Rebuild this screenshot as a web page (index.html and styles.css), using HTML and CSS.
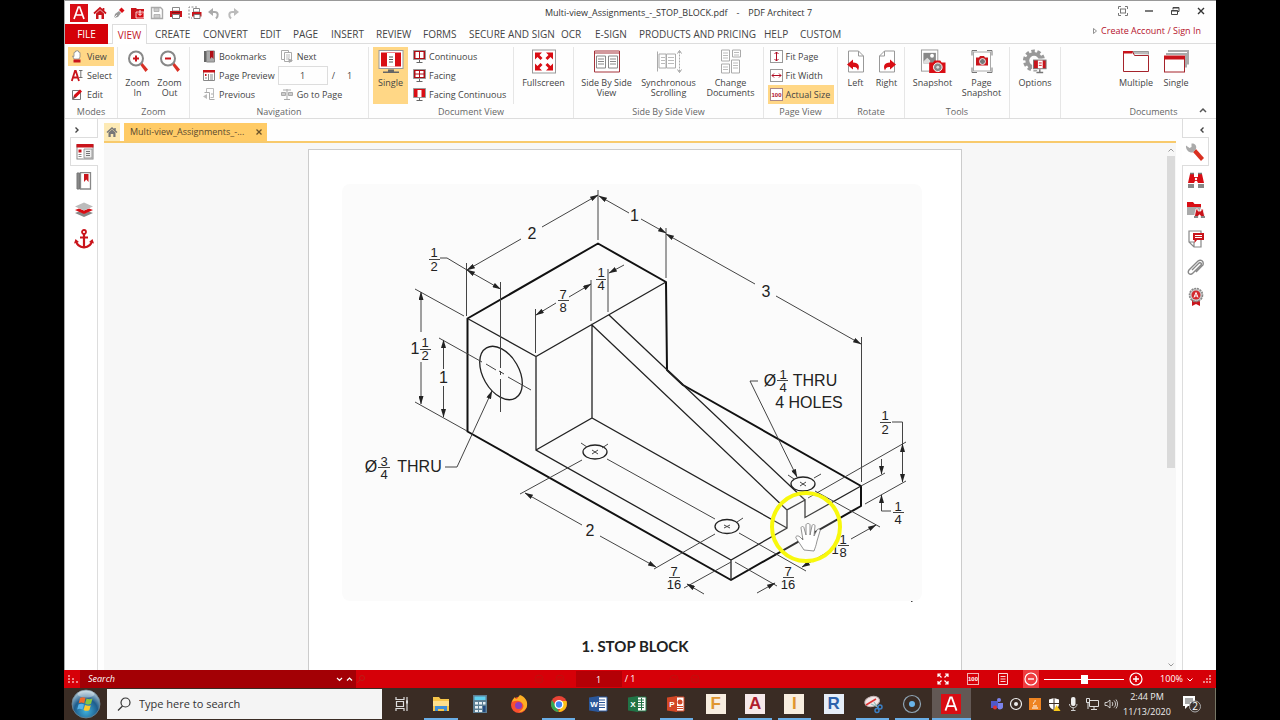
FILE: index.html
```html
<!DOCTYPE html>
<html lang="en">
<head>
<meta charset="utf-8">
<title>Multi-view_Assignments_-_STOP_BLOCK.pdf - PDF Architect 7</title>
<link rel="stylesheet" href="styles.css">
</head>
<body>
<div class="desktop">
<div class="app">
  <header class="titlebar">
    <div class="quick">
      <span class="logo"><svg width="18" height="18" viewBox="0 0 18 18"><rect width="18" height="18" fill="#d90d14"/><path d="M4 15L8.300 3h1.400L14 15M5.500 11h7" fill="none" stroke="#fff" stroke-width="1.700"/></svg></span>
      <button aria-label="Home"><svg width="14" height="14" viewBox="0 0 14 14"><path d="M1 7.500L7 2l6 5.500M10.500 2v3" fill="none" stroke="#c9141b" stroke-width="1.700"/><path d="M3 7.500L7 4l4 3.500V13H8.500V9h-3v4H3z" fill="#c9141b"/></svg></button>
      <button aria-label="Create"><svg width="14" height="14" viewBox="0 0 14 14"><path d="M2 12l1-4 4-3 2 2-3 4z" fill="#999"/><path d="M1.500 12.500L5 9" stroke="#eee"/><path d="M7 4l2.500-2.500L12.500 4.500 10 7z" fill="#d90d14"/></svg></button>
      <button aria-label="Open"><svg width="14" height="14" viewBox="0 0 14 14"><path d="M0 2h5l1 1h7v10H0z" fill="#c9141b"/><path d="M5 6h8v6H5z" fill="#d90d14" stroke="#fff" stroke-width=".8"/><path d="M9 4v5M7 7.500l2 2 2-2" stroke="#fff" fill="none"/></svg></button>
      <button aria-label="Save" disabled><svg width="14" height="14" viewBox="0 0 14 14"><path d="M1.500 1.500h9l2 2v9h-11z" fill="none" stroke="#aaa" stroke-width="1.400"/><path d="M4 2h5v3.500H4zM4 8.500h6V12H4z" fill="#ccc" stroke="#aaa" stroke-width=".8"/></svg></button>
      <button aria-label="Print"><svg width="14" height="14" viewBox="0 0 14 14"><path d="M3.500 1.500h7V5h-7z" fill="#fff" stroke="#888"/><path d="M1 5h12v6H1z" fill="#c9141b"/><path d="M3.500 8.500h7v4h-7z" fill="#fff" stroke="#777"/><path d="M3 6.500h8" stroke="#7d1014"/></svg></button>
      <button aria-label="Print area"><svg width="14" height="14" viewBox="0 0 14 14"><path d="M9 1H1v11h3" fill="none" stroke="#888" stroke-dasharray="2 1.500"/><path d="M5.500 2.500h6V6h-6z" fill="#fff" stroke="#888"/><path d="M4 6h9.500v4.500H4z" fill="#c9141b"/><path d="M6 8.500h6v4H6z" fill="#fff" stroke="#777"/></svg></button>
      <button aria-label="Undo" disabled><svg width="14" height="14" viewBox="0 0 14 14"><path d="M2 6h5.500c4 0 4 4 1.500 6.500" fill="none" stroke="#aaa" stroke-width="2"/><path d="M1 6l5-4v8z" fill="#aaa"/></svg></button>
      <button aria-label="Redo" disabled><svg width="14" height="14" viewBox="0 0 14 14"><path d="M12 6H6.500C2.500 6 2.500 10 5 12.500" fill="none" stroke="#bbb" stroke-width="2"/><path d="M13 6L8 2v8z" fill="#bbb"/></svg></button>
    </div>
    <div class="caption">Multi-view_Assignments_-_STOP_BLOCK.pdf<span>-</span>PDF Architect 7</div>
    <div class="winbtns">
      <button aria-label="Full view"><svg width="10" height="10" viewBox="0 0 10 10"><path d="M.5 3V.5H3M7 .5h2.500V3M9.500 7v2.500H7M3 9.500H.5V7" fill="none" stroke="#777"/><rect x="2.500" y="3" width="5" height="4" fill="none" stroke="#777"/></svg></button>
      <button aria-label="Minimize"><svg width="10" height="10" viewBox="0 0 10 10"><path d="M1 5h8" stroke="#333" stroke-width="1.300"/></svg></button>
      <button aria-label="Restore"><svg width="10" height="10" viewBox="0 0 10 10"><path d="M3 3.500V1.500h6v4H7.500M1.500 4.500h6v4h-6z" fill="none" stroke="#444"/><path d="M3 2h6M1.500 5h6" stroke="#444"/></svg></button>
      <button aria-label="Close"><svg width="10" height="10" viewBox="0 0 10 10"><path d="M2 2l6 6M8 2L2 8" stroke="#333" stroke-width="1.400"/></svg></button>
    </div>
  </header>

  <nav class="tabs">
    <button class="file">FILE</button>
    <button class="current">VIEW</button>
    <button>CREATE</button><button>CONVERT</button><button>EDIT</button><button>PAGE</button><button>INSERT</button><button>REVIEW</button><button>FORMS</button><button>SECURE AND SIGN</button><button>OCR</button><button>E-SIGN</button><button>PRODUCTS AND PRICING</button><button>HELP</button><button>CUSTOM</button>
    <a class="account" href="#"><svg width="4" height="6" viewBox="0 0 4 6"><path d="M.5.5L3.500 3 .5 5.500z" fill="none" stroke="#777" stroke-width=".8"/></svg>Create Account / Sign In</a>
  </nav>

  <div class="ribbon">
    <section class="group">
      <div class="items">
        <div class="stack modes">
          <button class="row on"><svg width="12" height="13" viewBox="0 0 12 13"><path d="M3 9L1.500 6l1.500.5V2.500l1.500-.5V1h1.500v-.3L7.500 1v1L9 2.500V7l-1 2z" fill="#fff" stroke="#888" stroke-width=".8"/><path d="M2.500 9.500h7v3h-7z" fill="#c9141b"/></svg>View</button>
          <button class="row"><svg width="12" height="13" viewBox="0 0 12 13"><path d="M.8 12L4 2h.8L8 12M2 8.500h5" fill="none" stroke="#c9141b" stroke-width="1.800"/><path d="M8 1.500h3.500M8 8.500h3.500M9.800 1.500v7" stroke="#555" stroke-width=".8"/></svg>Select</button>
          <button class="row"><svg width="12" height="13" viewBox="0 0 12 13"><path d="M1.500 2.500h8v9h-8z" fill="#fff" stroke="#777"/><path d="M2 11l1-4 6-5.500 2 2L5 9.500z" fill="#d90d14"/><path d="M3 8l1.500 1.500L2 11z" fill="#555"/></svg>Edit</button>
        </div>
      </div>
      <h2>Modes</h2>
    </section>
    <section class="group">
      <div class="items">
        <button class="big w32"><svg width="24" height="24" viewBox="0 0 24 24"><path d="M14 15l2-2 6 7-2.500 2.500z" fill="#d93025"/><circle cx="10" cy="9" r="7" fill="#fff" stroke="#888" stroke-width="2"/><path d="M10 6v6M7 9h6" stroke="#c9141b" stroke-width="2"/></svg>Zoom<br>In</button>
        <button class="big w32"><svg width="24" height="24" viewBox="0 0 24 24"><path d="M14 15l2-2 6 7-2.500 2.500z" fill="#d93025"/><circle cx="10" cy="9" r="7" fill="#fff" stroke="#888" stroke-width="2"/><path d="M7 9h6" stroke="#c9141b" stroke-width="2"/></svg>Zoom<br>Out</button>
      </div>
      <h2>Zoom</h2>
    </section>
    <section class="group">
      <div class="items spread">
        <div class="stack">
          <button class="row"><svg width="12" height="13" viewBox="0 0 12 13"><path d="M1 1h2v11H1z" fill="#666"/><path d="M3.500 1h8v11h-8z" fill="#aaa" stroke="#888"/><path d="M7 1h3.500v8L8.700 7 7 9z" fill="#b00d14"/></svg>Bookmarks</button>
          <button class="row"><svg width="12" height="13" viewBox="0 0 12 13"><path d="M.5 2h11v9.500H.5z" fill="#fff" stroke="#888"/><path d="M0 1h12v2.500H0z" fill="#c9141b"/><path d="M2 5h1.500v2H2z" fill="#c9141b"/><path d="M2 9h2M5.500 5v6M7 6h3M7 8h3M7 10h3" stroke="#888"/></svg>Page Preview</button>
          <button class="row"><svg width="12" height="13" viewBox="0 0 12 13"><path d="M3.500.5h7v9h-3M3.500.5v4" fill="none" stroke="#bbb"/><path d="M1.500 4.500h5v7h5M8 6h2" fill="none" stroke="#aaa"/><path d="M0 8.500L4 6v5z" fill="#bbb"/></svg>Previous</button>
        </div>
        <div class="stack">
          <button class="row"><svg width="12" height="13" viewBox="0 0 12 13"><path d="M.5.5h7v9h-7z" fill="#fff" stroke="#aaa"/><path d="M3.500 2.500h7v9h-7z" fill="#fff" stroke="#aaa"/><path d="M5 5h4M5 7h4M5 9h2" stroke="#bbb"/><path d="M7 8l5 2.500L8 13z" fill="#aaa"/></svg>Next</button>
          <div class="row pageno"><input type="text" value="1" aria-label="Page number"><span>/</span><span>1</span></div>
          <button class="row"><svg width="12" height="13" viewBox="0 0 12 13"><path d="M.5 4.500h4v3h-4zM7.500 4.500h4v3h-4z" fill="#ccc" stroke="#aaa"/><path d="M6 1v10M3 11.500h6M2 2h8" stroke="#aaa"/></svg>Go to Page</button>
        </div>
      </div>
      <h2>Navigation</h2>
    </section>
    <section class="group">
      <div class="items">
        <button class="big on w35"><svg width="26" height="24" viewBox="0 0 26 24"><rect x="1" y="1" width="24" height="18" fill="#fff" stroke="#999"/><path d="M3 3h20v14H3z" fill="#d90d14"/><path d="M9 3.500h8V17H9z" fill="#fff"/><path d="M11 7.500h4M11 10h4M11 12.500h4" stroke="#555"/><path d="M10 20h6v2h5v1.500H5V22h5z" fill="#666"/></svg>Single</button>
        <div class="stack dv">
          <button class="row"><svg width="13" height="13" viewBox="0 0 13 13"><path d="M.5.500h12v9H.5z" fill="#b00d14" stroke="#999"/><path d="M2.500 2h3.500v6H2.500zM7 2h3.500v6H7z" fill="#fff"/><path d="M6.500 10v2M3.500 12.500h6" stroke="#666"/></svg>Continuous</button>
          <button class="row"><svg width="13" height="13" viewBox="0 0 13 13"><path d="M.5.500h12v9H.5z" fill="#b00d14" stroke="#999"/><path d="M2.500 2h3.500v2.500H2.500zM7 2h3.500v2.500H7zM2.500 5.500h3.500V8H2.500zM7 5.500h3.500V8H7z" fill="#fff"/><path d="M6.500 10v2M3.500 12.500h6" stroke="#666"/></svg>Facing</button>
          <button class="row"><svg width="13" height="13" viewBox="0 0 13 13"><path d="M.5.500h12v9H.5z" fill="#d90d14" stroke="#999"/><path d="M4.500 2h4v7h-4z" fill="#fff"/><path d="M6.500 10v2M3.500 12.500h6" stroke="#666"/></svg>Facing Continuous</button>
        </div>
        <button class="big fullscreen"><svg width="24" height="24" viewBox="0 0 24 24"><rect x=".5" y=".5" width="23" height="23" fill="#fff" stroke="#999"/><path d="M3 3h7L7.500 5.500l3 3-2 2-3-3L3 10zM21 3v7l-2.500-2.500-3 3-2-2 3-3L14 3zM3 21v-7l2.500 2.500 3-3 2 2-3 3L10 21zM21 21h-7l2.500-2.500-3-3 2-2 3 3L21 14z" fill="#d90d14"/></svg>Fullscreen</button>
      </div>
      <h2>Document View</h2>
    </section>
    <section class="group">
      <div class="items">
        <button class="big w62"><svg width="26" height="24" viewBox="0 0 26 24"><path d="M.5 1.500h25v21H.5z" fill="#fff" stroke="#a5323a"/><path d="M.5 3.500h25" stroke="#a5323a"/><path d="M2.500 6.500h9v12h-9zM14.500 6.500h9v12h-9z" fill="#fff" stroke="#888"/><path d="M4 9.500h6M4 12h6M4 14.500h6M16 9.500h6M16 12h6M16 14.500h6" stroke="#888"/></svg>Side By Side<br>View</button>
        <button class="big w62"><svg width="26" height="24" viewBox="0 0 26 24"><path d="M1.500 2v20M3 4.500h7v14H3zM10.500 4.500h9v14h-9z" fill="#fff" stroke="#aaa"/><path d="M5 8h4M5 11h4M5 14h4M12 8h6M12 11h6M12 14h6" stroke="#bbb"/><path d="M23.500 2v20" stroke="#aaa" stroke-dasharray="2 1"/><path d="M21.500 4l2-3 2 3M21.500 20l2 3 2-3" fill="none" stroke="#999"/></svg>Synchronous<br>Scrolling</button>
        <button class="big w62"><svg width="26" height="24" viewBox="0 0 26 24"><path d="M3.500.5h8v11h-8zM14.500.5h8v7h-8zM3.500 14.500h8v9h-8zM13.500 10.500h8v13h-8z" fill="#fff" stroke="#aaa"/><path d="M5 3.500h5M5 6h5M5 8.500h5M16 3h5M16 5.500h5M5 17.500h5M5 20h5M15 13.500h5M15 16h5M15 18.500h5" stroke="#bbb"/></svg>Change<br>Documents</button>
      </div>
      <h2>Side By Side View</h2>
    </section>
    <section class="group">
      <div class="items">
        <div class="stack pv">
          <button class="row"><svg width="13" height="13" viewBox="0 0 13 13"><rect x=".5" y=".5" width="12" height="12" fill="#fff" stroke="#999"/><path d="M6.500 2v9M4.500 4l2-2 2 2M4.500 9l2 2 2-2" fill="none" stroke="#b00d24"/></svg>Fit Page</button>
          <button class="row"><svg width="13" height="13" viewBox="0 0 13 13"><rect x=".5" y=".5" width="12" height="12" fill="#fff" stroke="#999"/><path d="M2 6.500h9M4 4.500l-2 2 2 2M9 4.500l2 2-2 2" fill="none" stroke="#b00d24"/></svg>Fit Width</button>
          <button class="row on"><svg width="13" height="13" viewBox="0 0 13 13"><rect x=".5" y=".5" width="12" height="12" fill="#fff" stroke="#a88"/><text x="6.500" y="9" class="hundred">100</text></svg>Actual Size</button>
        </div>
      </div>
      <h2>Page View</h2>
    </section>
    <section class="group">
      <div class="items">
        <button class="big w31"><svg width="20" height="24" viewBox="0 0 20 24"><path d="M2.500 1.500h10l5 5v16h-15z" fill="#fff" stroke="#999"/><path d="M12.500 1.500v5h5" fill="none" stroke="#999"/><path d="M1 15l6-5v3c6 0 7 4 5 8-1-3-2-3.500-5-3.500V20z" fill="#d90d14"/></svg>Left</button>
        <button class="big w31"><svg width="20" height="24" viewBox="0 0 20 24"><path d="M17.500 1.500h-10l-5 5v16h15z" fill="#fff" stroke="#999"/><path d="M7.500 1.500v5h-5" fill="none" stroke="#999"/><path d="M19 15l-6-5v3c-6 0-7 4-5 8 1-3 2-3.500 5-3.500V20z" fill="#d90d14"/></svg>Right</button>
      </div>
      <h2>Rotate</h2>
    </section>
    <section class="group">
      <div class="items">
        <button class="big w49"><svg width="26" height="26" viewBox="0 0 26 26"><rect x="1" y="1" width="17" height="22" fill="#fff" stroke="#999"/><path d="M3 4h13v11H3z" fill="#888"/><circle cx="12" cy="7" r="2" fill="#fff"/><path d="M3 13l4-4 3 3v3H3z" fill="#ddd"/><path d="M9 14h4l1.500-2h6l1.500 2h4v11H9z" fill="#d90d14"/><circle cx="18" cy="19" r="4.500" fill="#888" stroke="#fff"/><circle cx="18" cy="19" r="1.500" fill="#ddd"/></svg>Snapshot</button>
        <button class="big w49"><svg width="22" height="24" viewBox="0 0 22 24"><path d="M1 6V1h5M16 1h5v5M21 18v5h-5M6 23H1v-5" fill="none" stroke="#777"/><rect x="2.500" y="2.500" width="17" height="19" fill="#fff" stroke="#aaa"/><path d="M5 8h3l1-1.500h4L14 8h3v8H5z" fill="#c9141b"/><circle cx="11.500" cy="12" r="3" fill="#777" stroke="#fff" stroke-width=".8"/></svg>Page<br>Snapshot</button>
      </div>
      <h2>Tools</h2>
    </section>
    <section class="group">
      <div class="items">
        <button class="big w49"><svg width="26" height="26" viewBox="0 0 26 26"><circle cx="12" cy="12" r="9.500" fill="none" stroke="#999" stroke-width="4" stroke-dasharray="3.500 2.470"/><circle cx="12" cy="12" r="7" fill="none" stroke="#999" stroke-width="4"/><rect x="10" y="10" width="15" height="12" fill="#fff"/><rect x="11.500" y="11.500" width="13" height="9" fill="#c9141b" stroke="#777"/><path d="M16 12h5v8h-5z" fill="#fff"/><path d="M17 14.500h3M17 17h3" stroke="#c9141b"/><path d="M18 21v3M14.500 24.500h7" stroke="#777" stroke-width="1.500"/></svg>Options</button>
      </div>
    </section>
    <section class="group docs">
      <div class="items">
        <button class="big w40"><svg width="26" height="24" viewBox="0 0 26 24"><path d="M9 4.500V2h16.500v3" fill="#bbb" stroke="#999"/><path d="M.5 2h9l2 4h14v16H.5z" fill="#fff" stroke="#a5232b"/><path d="M0 1.500h9.500V4H0z" fill="#c9141b"/></svg>Multiple</button>
        <button class="big w40"><svg width="26" height="24" viewBox="0 0 26 24"><path d="M5 1.500h20V15M3 4.500h20V18" fill="none" stroke="#aaa" stroke-width="2"/><rect x="1.500" y="7.500" width="20" height="15" fill="#fff" stroke="#a5232b"/><path d="M1 6h21v4H1z" fill="#c9141b"/></svg>Single</button>
      </div>
      <h2>Documents</h2>
      <button class="collapse" aria-label="Collapse ribbon"><svg width="8" height="6" viewBox="0 0 8 6"><path d="M1 5l3-3 3 3" fill="none" stroke="#555" stroke-width="1.500"/></svg></button>
    </section>
  </div>

  <div class="work">
    <aside class="rail left">
      <button class="toggle" aria-label="Expand"><svg width="6" height="8" viewBox="0 0 6 8"><path d="M1.500 1.500L4 4 1.500 6.500" fill="none" stroke="#444" stroke-width="1.400"/></svg></button>
      <button class="sel" aria-label="Pages"><svg width="18" height="16" viewBox="0 0 18 16"><rect x="1" y="1" width="16" height="14" fill="#fff" stroke="#888"/><path d="M.5 0h17v3.500H.5z" fill="#c9141b"/><path d="M2.500 5.500h3v3h-3z" fill="#c9141b"/><path d="M2.500 10.500h3M2.500 12.500h3" stroke="#888"/><path d="M8 5h8v9H8z" fill="#eee" stroke="#888" stroke-width=".8"/><path d="M10 7.500h4M10 9.500h4M10 11.500h4" stroke="#777"/></svg></button>
      <button aria-label="Bookmarks"><svg width="16" height="18" viewBox="0 0 16 18"><path d="M1 1h2.500v16H1z" fill="#888" stroke="#777"/><path d="M4.500.5h10v16.500h-10z" fill="#fff" stroke="#888" stroke-width="1.300"/><path d="M8 2h4.500v8l-2.200-2.500L8 10z" fill="#c9141b"/></svg></button>
      <button aria-label="Layers"><svg width="20" height="16" viewBox="0 0 20 16"><path d="M1 11l9 4 9-4-4-1.500-5 2-5-2z" fill="#888"/><path d="M1 8l9 4 9-4-4-1.500-5 2-5-2z" fill="#d90d14"/><path d="M1 4.500L10 .5l9 4-9 4z" fill="#bbb"/></svg></button>
      <button aria-label="Destinations"><svg width="20" height="20" viewBox="0 0 20 20"><circle cx="10" cy="3" r="2" fill="none" stroke="#c9141b" stroke-width="1.800"/><path d="M10 5v14M6 8.500h8M2 12c1 5 4 6 8 6.500 4-.5 7-1.500 8-6.500" fill="none" stroke="#c9141b" stroke-width="2.200"/><path d="M0 14.500l1.500-4.500L5 13zM20 14.500L18.500 10 15 13z" fill="#c9141b"/></svg></button>
    </aside>

    <main class="viewer">
      <div class="doctabs">
        <button class="home" aria-label="Start page"><svg width="12" height="12" viewBox="0 0 12 12"><path d="M1 6.500L6 2l5 4.500M9 2v2.500" fill="none" stroke="#777" stroke-width="1.500"/><path d="M2.500 6.500L6 3.500l3.500 3V11H7.300V8H4.700v3H2.500z" fill="#777"/></svg></button>
        <button class="doctab"><span>Multi-view_Assignments_-...</span><svg width="6" height="6" viewBox="0 0 6 6"><path d="M.5.5l5 5M5.500.5l-5 5" stroke="#6b5228" stroke-width="1.300"/></svg></button>
      </div>
      <div class="canvas">
        <div class="pagearea">
          <article class="page">
            <svg class="drawing" viewBox="309 150 652 482" role="img" aria-label="Isometric view of a stop block">
              <defs>
                <marker id="arr" viewBox="0 0 10 6" refX="9.500" refY="3" markerWidth="9" markerHeight="5" markerUnits="userSpaceOnUse" orient="auto-start-reverse"><path d="M0 0l10 3-10 3z" fill="#222"/></marker>
              </defs>
              <rect x="342" y="184" width="580" height="417" rx="8" fill="#fbfbfb"/>
              <path class="thick" d="M467.500 318.500L598 243.500 666 282l1 88 16 15 178 101v20L731 580 467.500 431.500z"/>
              <path class="med" d="M467.500 318.500L536 356.500 666 282M536 356.500V450l195 110 56-32v-18l18-10v17.500L861 486M536 450l56-32 195 110M592 418v-93l195 185M609 315l196 185M731 560v20"/>
              <g class="med">
                <ellipse cx="501" cy="373" rx="29" ry="18" transform="rotate(60 501 373)"/>
                <ellipse cx="595" cy="452" rx="12" ry="7"/><ellipse cx="727" cy="526.500" rx="12" ry="7"/><ellipse cx="803" cy="484" rx="12" ry="7"/>
              </g>
              <g class="thin">
                <path d="M598 190v50M466.500 263v53M500.500 282v86M500.500 371v4M500.500 379v33M415 289l49 27M415 402l52 29M535.500 309v44M591 280v41M608 269v43M666 228v50M861.500 337v145"/>
                <path d="M439 338l43 24M486 364l10 6M499 371l5 3M508 377l23 13"/>
                <path d="M581 443l6 4M608 444l-6 4M592 454l6-4M592 450l6 4M582 460l-62 34M607 459l108 60M739 533l67 38M743 518l-6 4M715 534l-61 35M724 528l6-3M724 525l6 3M788 475l6 4M821 474l-7 4M800 486l6-4M800 482l6 4M815 491l65 36M808 498l98-56M861 486l24-13M865 504l41-23M731 562l-47 26M735 562l42 24"/>
                <path marker-end="url(#arr)" d="M542 227l56-32"/><path marker-end="url(#arr)" d="M521 239l-54 31"/>
                <path marker-end="url(#arr)" d="M629 213l-30-17"/><path marker-end="url(#arr)" d="M641 219l25 14"/>
                <path marker-end="url(#arr)" d="M755 284l-89-50"/><path marker-end="url(#arr)" d="M776 296l85 48"/>
                <path d="M440 258h7l20 12"/><path marker-start="url(#arr)" marker-end="url(#arr)" d="M467 270l33.500 19"/>
                <path marker-end="url(#arr)" d="M556 303l-20 12"/><path marker-end="url(#arr)" d="M569 297l22-13"/><path marker-end="url(#arr)" d="M624 265l-15 8"/>
                <path marker-end="url(#arr)" d="M421 332v-40"/><path marker-end="url(#arr)" d="M421 362v42"/>
                <path marker-end="url(#arr)" d="M443.500 369v-29"/><path marker-end="url(#arr)" d="M443.500 386v31"/>
                <path marker-end="url(#arr)" d="M445 467h12l35-76"/><path marker-end="url(#arr)" d="M758 381h-8l47 96"/>
                <path marker-end="url(#arr)" d="M582 525l-57-32"/><path marker-end="url(#arr)" d="M600 536l56 31"/>
                <path marker-end="url(#arr)" d="M704 594l-17-10"/><path marker-end="url(#arr)" d="M757 593l18-10"/>
                <path marker-end="url(#arr)" d="M826 553l-24 14"/><path marker-end="url(#arr)" d="M851 539l25-14"/>
                <path d="M892 422h10.500v24"/><path marker-start="url(#arr)" marker-end="url(#arr)" d="M902.500 444v38"/>
                <path marker-end="url(#arr)" d="M881.500 459v15"/><path marker-end="url(#arr)" d="M891 511h-9.500v-16"/>
                <path d="M429 259.500h11M558 300.500h11M596 279.500h10M420 349.500h11M378 467.500h12M777 380.500h11M880 422.500h11M893 512.500h11M669 577.500h11M783 577.500h11M838 545.500h11"/>
                <path d="M911 601.500h1.500"/>
              </g>
              <g class="dim">
                <text x="532" y="239">2</text><text x="634.500" y="221">1</text><text x="766" y="297">3</text><text x="590" y="536">2</text>
                <text x="415" y="354">1</text><text x="443.500" y="383">1</text>
                <text x="371" y="472">Ø</text><text x="419.500" y="472">THRU</text><text x="770" y="386">Ø</text><text x="815" y="386">THRU</text><text x="809" y="408">4 HOLES</text>
              </g>
              <g class="frac">
                <text x="434" y="257">1</text><text x="434" y="271">2</text>
                <text x="563" y="299">7</text><text x="563" y="312">8</text>
                <text x="601" y="277">1</text><text x="601" y="290">4</text>
                <text x="425" y="347">1</text><text x="425" y="360">2</text>
                <text x="384" y="466">3</text><text x="384" y="479">4</text>
                <text x="783" y="379">1</text><text x="783" y="392">4</text>
                <text x="885" y="420">1</text><text x="885" y="434">2</text>
                <text x="898" y="511">1</text><text x="898" y="524">4</text>
                <text x="674" y="576">7</text><text x="674" y="589">16</text>
                <text x="788" y="576">7</text><text x="788" y="589">16</text>
                <text x="835" y="554">1</text><text x="843" y="544">1</text><text x="843" y="557">8</text>
              </g>
              <circle cx="806" cy="527" r="34" fill="#fdfdf8" fill-opacity=".15" stroke="#f8f80c" stroke-width="4"/>
              <path d="M804 550l-8-12c-1-2 2-3 4-1l3 3-2-12c0-2 3-2 3 0l2 7v-10c0-2 4-2 4 0v10l2-9c0-2 3-2 3 0l-1 10 3-6c1-2 4-1 3 1l-3 10c-1 5-2 7-3 10z" fill="#fff" stroke="#777" stroke-width=".8"/>
            </svg>
            <h1>1. STOP BLOCK</h1>
          </article>
        </div>
        <div class="scroll">
          <svg width="6" height="4" viewBox="0 0 6 4"><path d="M.5 3.500L3 1l2.500 2.500" fill="none" stroke="#999"/></svg>
          <div class="track"><div class="thumb"></div></div>
          <svg width="6" height="4" viewBox="0 0 6 4"><path d="M.5.5L3 3 5.500.5" fill="none" stroke="#999"/></svg>
        </div>
      </div>
    </main>

    <aside class="rail right">
      <button class="toggle" aria-label="Expand"><svg width="6" height="8" viewBox="0 0 6 8"><path d="M4.500 1.500L2 4l2.500 2.500" fill="none" stroke="#444" stroke-width="1.400"/></svg></button>
      <button class="sel" aria-label="Tools"><svg width="20" height="20" viewBox="0 0 20 20"><path d="M8 10l3-3 8 9-3 3z" fill="#d93020"/><path d="M1 3.500L4.500 6l2-1V1.500C10 1 12 4 11 7l-3 3.500C4 11 .5 8 1 3.500z" fill="#aaa"/></svg></button>
      <button aria-label="Search"><svg width="18" height="18" viewBox="0 0 18 18"><path d="M3 2h4v3h4V2h4l2 9h-6l-1-2H8l-1 2H1z" fill="#d90d14"/><path d="M3 1.500h4M11 1.500h4" stroke="#777" stroke-width="1.500"/><path d="M1 12h6v4H1zM11 12h6v4h-6z" fill="#888"/><circle cx="9" cy="7" r="1.200" fill="#fff"/></svg></button>
      <button aria-label="Search folder"><svg width="20" height="18" viewBox="0 0 20 18"><path d="M1 1h6l1.500 2H15v4H1z" fill="#d90d14"/><path d="M1 6h14l-2 8H1z" fill="#aaa"/><path d="M8 17l2-9h2v2h3V8h2l2 9h-4l-1-3h-1l-1 3z" fill="#c9141b" stroke="#fff" stroke-width=".8"/><path d="M8 16h4M15 16h4" stroke="#888" stroke-width="2"/></svg></button>
      <button aria-label="Comments"><svg width="18" height="18" viewBox="0 0 18 18"><path d="M2 1h12v16H7l-5-5zM7 17v-5H2" fill="#fff" stroke="#888" stroke-width="1.200"/><path d="M6 3h11v7h-7l-2.500 3V10H6z" fill="#c9141b"/><path d="M8 5.500h7M8 7.500h7" stroke="#fff"/></svg></button>
      <button aria-label="Attachments"><svg width="18" height="18" viewBox="0 0 18 18"><path d="M5 11l7-7c2-1 3 1 2 2l-8 8c-3 3-6 0-4-3l9-9c3-2 6 0 5 4l-7 7" fill="none" stroke="#888" stroke-width="1.400"/></svg></button>
      <button aria-label="Signatures"><svg width="18" height="20" viewBox="0 0 18 20"><path d="M5 13v6l4-2 4 2v-6z" fill="#c9141b"/><circle cx="9" cy="8" r="6.500" fill="#ccc" stroke="#888" stroke-width="1.600" stroke-dasharray="2 .8"/><circle cx="9" cy="8" r="4.500" fill="#d32a2f"/><path d="M7 10.500L9 5.500l2 5M7.500 9h3" stroke="#fff" fill="none"/></svg></button>
    </aside>
  </div>

  <footer class="status">
    <svg width="10" height="8" viewBox="0 0 10 8"><path d="M0 1h2M0 4h2M0 7h2M4 4h2M4 7h2M8 7h2" stroke="#f3b0b0" stroke-width="1.500"/></svg>
    <div class="find"><input type="text" placeholder="Search" aria-label="Search document"><svg width="18" height="6" viewBox="0 0 18 6"><path d="M1 2l2.500 2.500L6 2M11 4.500L13.500 2 16 4.500" fill="none" stroke="#fff" stroke-width="1.200"/></svg></div>
    <svg class="findgo" width="10" height="10" viewBox="0 0 10 10"><circle cx="6" cy="4" r="2.500" fill="none" stroke="#a32"/><path d="M4 6L1 9" stroke="#a32"/></svg>
    <div class="pager">
      <svg width="36" height="10" viewBox="0 0 36 10"><g fill="none" stroke="#b31b10"><circle cx="7" cy="5" r="4"/><circle cx="28" cy="5" r="4"/><path d="M4 5h6M25 5h6"/></g></svg>
      <input type="text" value="1" aria-label="Current page"><span>/ 1</span>
      <svg width="36" height="10" viewBox="0 0 36 10"><g fill="none" stroke="#b31b10"><circle cx="7" cy="5" r="4"/><circle cx="28" cy="5" r="4"/><path d="M4 5h6M25 5h6"/></g></svg>
    </div>
    <div class="zoombar">
      <button aria-label="Fit"><svg width="12" height="12" viewBox="0 0 12 12"><path d="M1 4V1h3M8 1h3v3M11 8v3H8M4 11H1V8M1 1l3.500 3.500M11 1L7.500 4.500M11 11L7.500 7.500M1 11l3.500-3.500" fill="none" stroke="#fff" stroke-width="1.200"/></svg></button>
      <button aria-label="Actual size"><svg width="12" height="12" viewBox="0 0 12 12"><rect x=".5" y=".5" width="11" height="11" fill="none" stroke="#f3b0b0"/><text x="6" y="8" class="hundred white">100</text></svg></button>
      <button aria-label="Single page"><svg width="10" height="12" viewBox="0 0 10 12"><path d="M.5.500h9v11h-9zM2.500 3.500h5M2.500 6h5M2.500 8.500h5" fill="none" stroke="#fbd5d5"/></svg></button>
      <button class="minus" aria-label="Zoom out"><svg width="14" height="14" viewBox="0 0 14 14"><circle cx="7" cy="7" r="6" fill="none" stroke="#fff" stroke-width="1.200"/><path d="M4 7h6" stroke="#fff" stroke-width="1.400"/></svg></button>
      <input type="range" min="0" max="100" value="50" aria-label="Zoom">
      <button aria-label="Zoom in"><svg width="14" height="14" viewBox="0 0 14 14"><circle cx="7" cy="7" r="6" fill="none" stroke="#fff" stroke-width="1.200"/><path d="M4 7h6M7 4v6" stroke="#fff" stroke-width="1.400"/></svg></button>
      <button class="pct">100% <svg width="6" height="5" viewBox="0 0 6 5"><path d="M.5 1.500L3 4l2.500-2.500" fill="none" stroke="#fff"/></svg></button>
      <svg width="9" height="8" viewBox="0 0 9 8"><path d="M6 1h2M6 4h2M3 4h2M6 7h2M3 7h2M0 7h2" stroke="#f3b0b0" stroke-width="1.500"/></svg>
    </div>
  </footer>
</div>

<div class="taskbar">
  <button class="start" aria-label="Start"><svg width="30" height="30" viewBox="0 0 30 30"><defs><radialGradient id="orb" cx=".5" cy=".75" r=".7"><stop offset="0" stop-color="#3fb0dc"/><stop offset=".6" stop-color="#1e5c8c"/><stop offset="1" stop-color="#a9c4d2"/></radialGradient></defs><circle cx="15" cy="15" r="14" fill="url(#orb)" stroke="#6f8794" stroke-width=".8"/><path d="M7 3.500c5-3 11-3 16 0 2 3-3 5-8 5s-10-2-8-5z" fill="#fff" opacity=".35"/><path d="M9 9c2-1.300 3.500-1 5.500 0l-1.300 5.300c-2-1-4-1-5.500 0z" fill="#ef6b2b"/><path d="M15.500 9.500c2 1 4 1 6 0L20 14.800c-2 1-4 .8-5.800-.2z" fill="#8cc63f"/><path d="M7.500 15.500c2-1 3.500-1 5.500 0l-1.500 5c-2-1-3.500-1-5.300 0z" fill="#5ab4ea"/><path d="M14 16c2 1 4 1 5.800.2l-1.500 5c-2 1-4 .8-5.800-.2z" fill="#fdc92c"/></svg></button>
  <label class="search"><svg width="14" height="14" viewBox="0 0 14 14"><circle cx="8.500" cy="5.500" r="4.500" fill="none" stroke="#333" stroke-width="1.200"/><path d="M5.500 9L1 13.500" stroke="#333" stroke-width="1.300"/></svg><input type="text" placeholder="Type here to search" aria-label="Type here to search"></label>
  <div class="pins">
    <button aria-label="Task view"><svg width="16" height="16" viewBox="0 0 16 16"><path d="M2 1v2.500h8V1M2 15v-2.500h8V15M2.500 5.500h7v5h-7zM13 1v14" fill="none" stroke="#ddd" stroke-width="1.200"/><path d="M12 4.500h2v3h-2z" fill="#ddd"/></svg></button>
    <button class="run" aria-label="File Explorer"><svg width="20" height="18" viewBox="0 0 20 18"><path d="M2 2h6l1.500 2H18v12H2z" fill="#f6c549"/><path d="M2 6h16v5H2z" fill="#fde08c"/><path d="M4 16v-5h12v5h-3v-2H7v2z" fill="#3f8fd6"/></svg></button>
    <button aria-label="Calculator"><svg width="16" height="20" viewBox="0 0 16 20"><rect x="1" y="1" width="14" height="18" fill="#5d7f94"/><path d="M2.500 2.500h11V6h-11z" fill="#5fd0ee"/><path d="M3 8h3v2.500H3zM7 8h3v2.500H7zM11 8h2.500v2.500H11zM3 12h3v2.500H3zM7 12h3v2.500H7zM3 16h3v2H3zM7 16h3v2H7z" fill="#e8f0f4"/><path d="M11 12h2.500v6H11z" fill="#234a80"/></svg></button>
    <button aria-label="Firefox"><svg width="20" height="20" viewBox="0 0 20 20"><circle cx="10" cy="11" r="8" fill="#f9502e"/><path d="M3 8c1-3 2-4 3-5 0 2 1 2 2 2 1-2 2-3 3-4 5 2 8 6 7 11-1 4-5 6-8 6 5-3 6-7 2-10-3-2-6-1-9 0z" fill="#fdaf24"/><circle cx="9.500" cy="11.500" r="3.500" fill="#8a3fc0"/></svg></button>
    <button class="run" aria-label="Chrome"><svg width="20" height="20" viewBox="0 0 20 20"><circle cx="10" cy="10" r="8" fill="#e94335"/><path d="M3 6l4 6 3 6C4 18 0 12 3 6z" fill="#34a853"/><path d="M10 7h7.500C19 12 16 18 9.500 18L13 12z" fill="#fbc116"/><circle cx="10" cy="10.500" r="3.800" fill="#4285f4" stroke="#fff" stroke-width="1.300"/></svg></button>
    <button aria-label="Word"><svg width="20" height="18" viewBox="0 0 20 18"><path d="M9 2h10v14H9z" fill="#fff" stroke="#2b579a"/><path d="M11 5h6M11 7.500h6M11 10h6M11 12.500h6" stroke="#2b579a"/><path d="M1 2.500L11 1v16L1 15.500z" fill="#2b579a"/><text x="6" y="12">W</text></svg></button>
    <button aria-label="Excel"><svg width="20" height="18" viewBox="0 0 20 18"><path d="M9 2h10v14H9z" fill="#fff" stroke="#217346"/><path d="M11 5h6M11 7.500h6M11 10h6M11 12.500h6M14.500 3v12" stroke="#217346"/><path d="M1 2.500L11 1v16L1 15.500z" fill="#217346"/><text x="6" y="12">X</text></svg></button>
    <button class="run" aria-label="PowerPoint"><svg width="20" height="18" viewBox="0 0 20 18"><path d="M9 2h9v14H9z" fill="#fff" stroke="#d24726"/><circle cx="14" cy="7" r="2.500" fill="#d24726"/><path d="M11 11.500h6M11 13.500h6" stroke="#d24726"/><path d="M1 2.500L11 1v16L1 15.500z" fill="#d24726"/><text x="6" y="12">P</text></svg></button>
    <button aria-label="Fusion"><span class="tile orange">F</span></button>
    <button class="run" aria-label="AutoCAD"><span class="tile crimson">A</span></button>
    <button class="run" aria-label="Inventor"><span class="tile orange">I</span></button>
    <button aria-label="Revit"><span class="tile blue">R</span></button>
    <button class="run" aria-label="Snipping Tool"><svg width="20" height="20" viewBox="0 0 20 20"><ellipse cx="9" cy="7.500" rx="7.500" ry="5" fill="#f2e7e7" stroke="#c5b5b5" transform="rotate(-15 9 7)"/><path d="M3 11l10-6" stroke="#d33" stroke-width="1.500"/><path d="M8 10l7 3M11 8l4 6" stroke="#9bb" stroke-width="1.200"/><circle cx="17" cy="13" r="2" fill="none" stroke="#3b7fc4" stroke-width="1.500"/><circle cx="14" cy="16.500" r="2" fill="none" stroke="#3b7fc4" stroke-width="1.500"/></svg></button>
    <button class="run" aria-label="Recorder"><svg width="20" height="20" viewBox="0 0 20 20"><circle cx="10" cy="10" r="8.500" fill="none" stroke="#8fa5b5" stroke-width="1.200"/><circle cx="10" cy="10" r="3" fill="#6ab4e8"/></svg></button>
    <button class="run active" aria-label="PDF Architect"><svg width="20" height="20" viewBox="0 0 18 18"><rect width="18" height="18" fill="#d90d14"/><path d="M4 15L8.300 3h1.400L14 15M5.500 11h7" fill="none" stroke="#fff" stroke-width="1.600"/></svg></button>
  </div>
  <div class="tray">
    <svg width="14" height="14" viewBox="0 0 14 14"><rect x="1" y="4" width="7" height="7" fill="#5059c9"/><circle cx="9" cy="3" r="2" fill="#7b83eb"/><path d="M8 6h5v4c0 2-3 3-5 2z" fill="#7b83eb"/><circle cx="5" cy="10.500" r="2" fill="#d33"/></svg>
    <svg width="14" height="14" viewBox="0 0 14 14"><circle cx="7" cy="7" r="5.500" fill="none" stroke="#eee" stroke-width="1.200"/><circle cx="7" cy="7" r="2" fill="#eee"/></svg>
    <svg width="14" height="14" viewBox="0 0 14 14"><rect x="1" y="1" width="12" height="12" fill="#ee8422"/><path d="M4 11h6M5 9h4M6 7c-2-1 2-2 1-4" stroke="#fff" fill="none"/></svg>
    <svg width="14" height="14" viewBox="0 0 14 14"><path d="M7 1l5 1.500V7c0 3-2 5-5 6-3-1-5-3-5-6V2.500z" fill="#fff"/><path d="M7 1v12M2 6.500h10" stroke="#3a2c24"/><path d="M9.500 8l4 6h-7z" fill="#f8c81c"/></svg>
    <svg width="14" height="14" viewBox="0 0 14 14"><rect x="5" y="0" width="4.500" height="9" rx="2" fill="#eee"/><path d="M3.500 7c0 5 7.500 5 7.500 0M7.200 10.500V13M5 13.500h4.500" fill="none" stroke="#ccc"/></svg>
    <svg width="14" height="14" viewBox="0 0 14 14"><path d="M4.500 3.500h9v6h-9zM9 10v2M6 12.500h6M1.500 1.500h3v4h-3zM3 6v6" fill="none" stroke="#ddd"/></svg>
    <svg width="14" height="14" viewBox="0 0 14 14"><path d="M1 5.500h2l3-2.500v8L3 8.500H1zM8 5c1 1 1 3 0 4M10 3.500c2 2 2 5 0 7M12 2.500c2 2.500 2 6.500 0 9" fill="none" stroke="#ddd" stroke-width=".9"/></svg>
  </div>
  <div class="clock"><span>2:44 PM</span><span>11/13/2020</span></div>
  <button class="notify" aria-label="Notifications"><svg width="22" height="20" viewBox="0 0 22 20"><path d="M2 2h12v10H7l-3 3v-3H2z" fill="#fff"/><path d="M4 5h8M4 7h8M4 9h5" stroke="#555"/><circle cx="14" cy="12.500" r="5.500" fill="#3d332e" stroke="#aaa"/><text x="14" y="16">2</text></svg></button>
</div>
</div>
</body>
</html>
```
FILE: styles.css
```css
* { box-sizing: border-box; }
body {
  margin: 0;
  background: #000;
  font-family: "Open Sans", "Noto Sans", sans-serif;
  font-size: 9px;
  line-height: 10px;
  color: #444;
}
button, input { font: inherit; color: inherit; border: 0; background: none; padding: 0; margin: 0; }
button { white-space: nowrap; }
svg { display: block; flex: none; }
h1, h2 { margin: 0; font-weight: 400; }

.desktop { height: 100vh; margin: 0 5%; display: flex; flex-direction: column; }
.app {
  flex: 1; min-height: 0; display: flex; flex-direction: column;
  background: #fefefe; border-top: 1px solid #999; border-left: 1px solid #aaa;
}

/* Title bar */
.titlebar { height: 23px; display: grid; grid-template-columns: 1fr auto 1fr; align-items: center; }
.quick { display: flex; align-items: center; padding: 1px 0 0 5px; }
.quick .logo { margin-right: 2px; }
.quick button { width: 19px; display: flex; justify-content: center; padding: 0; }
.caption { color: #333; padding-left: 76px; white-space: nowrap; }
.caption span { margin: 0 9px; }
.winbtns { display: flex; justify-content: flex-end; gap: 16px; padding: 0 10px 4px 0; }

/* Ribbon tabs */
.tabs {
  height: 20px; display: grid; align-items: center;
  grid-template-columns: 43px 47px 48px 57px 33px 38px 45px 47px 46px 92px 34px 44px 125px 36px auto 1fr;
  font-size: 10px; border-bottom: 1px solid #ddd;
}
.tabs button { text-align: left; height: 20px; }
.tabs .file { background: #d40008; color: #fff; text-align: center; }
.tabs .current {
  color: #c3182a; text-align: center; margin: 0 8px 0 4px; background: #fff;
  border: 1px solid #ddd; border-bottom: 0;
}
.account {
  justify-self: end; display: flex; align-items: center; gap: 4px;
  color: #b5122c; text-decoration: none; padding: 0 15px 6px 0; font-size: 9px;
}

/* Ribbon */
.ribbon {
  height: 75px; display: grid; padding-top: 3px;
  grid-template-columns: 53px 72px 179px 205px 190px 74px 67px 105px 51px 1fr;
  border-bottom: 1px solid #ddd; background: #fefefe;
}
.group {
  display: flex; flex-direction: column; justify-content: space-between;
  border-right: 1px solid #e6e6e6; position: relative;
}
.group h2 { font-size: 9px; line-height: 12px; text-align: center; color: #666; }
.items { display: flex; justify-content: center; height: 57px; }
.stack { display: flex; flex-direction: column; }
.row { height: 19px; display: flex; align-items: center; gap: 4px; padding: 0 3px; }
.on { background: #ffd786; }
.modes .row { width: 46px; }
.spread { justify-content: space-between; padding: 0 16px 0 10px; }
.pageno { padding: 0; gap: 0; }
.pageno input { width: 50px; height: 19px; border: 1px solid #ddd; text-align: center; }
.pageno span { padding-left: 4px; }
.pageno span + span { padding-left: 12px; }
.big {
  display: flex; flex-direction: column; align-items: center; text-align: center;
  padding-top: 2px;
}
.big svg { margin-bottom: 4px; height: 25px; }
.w31 { width: 31px; }
.w32 { width: 32px; }
.w35 { width: 35px; }
.w40 { width: 40px; }
.w49 { width: 49px; }
.w62 { width: 62px; }
.dv { flex: 1; }
.dv .row { gap: 3px; padding-left: 5px; }
.group:nth-child(4) .items { padding-left: 4px; }
.fullscreen { width: 60px; border-left: 1px solid #e6e6e6; }
.pv .row { width: 66px; gap: 3px; padding: 0 2px; }
.docs { border-right: 0; }
.docs .items { justify-content: flex-end; padding-right: 20px; }
.docs h2 { padding-left: 30px; }
.collapse { position: absolute; right: 9px; bottom: 5px; }
.hundred { font: 700 6px "Liberation Sans", sans-serif; fill: #b00d24; text-anchor: middle; }
.hundred.white { fill: #fff; }

/* Work area */
.work { flex: 1; min-height: 0; display: grid; grid-template-columns: 33px 1fr 34px; gap: 6px; }
.rail { display: flex; flex-direction: column; background: #fff; }
.rail button { height: 29px; display: flex; align-items: center; justify-content: center; }
.rail .toggle { height: 18px; padding-top: 4px; }
.left { border-right: 1px solid #ddd; }
.left button { margin-left: 5px; }
.left .toggle { margin: 0 8px 0 0; }
.left .sel { border: 1px solid #ddd; border-right: 0; margin-right: -1px; background: #fff; }
.right { border-left: 1px solid #ddd; }
.right button { margin-right: 7px; }
.right .toggle { margin: 0 0 0 5px; }
.right .sel { border: 1px solid #ddd; border-left: 0; margin-left: -1px; background: #fff; }

.viewer { display: flex; flex-direction: column; min-height: 0; min-width: 0; }
.doctabs {
  height: 24px; display: flex; align-items: flex-end; gap: 4px;
  border-bottom: 2px solid #f8ca6c;
}
.home { width: 16px; height: 18px; background: #fdeab5; display: flex; align-items: center; justify-content: center; }
.doctab {
  width: 143px; height: 18px; background: #ffcb66; color: #5a4a30;
  display: flex; align-items: center; justify-content: space-between; padding: 0 5px 0 6px;
}
.canvas { flex: 1; min-height: 0; display: flex; background: #f7f7f7; }
.pagearea { flex: 1; min-width: 0; overflow: hidden; padding-top: 6px; display: flex; justify-content: center; align-items: flex-start; }
.page {
  width: 654px; min-height: 846px; background: #fff; border: 1px solid #ccc;
}
.page h1 { font: 700 15px/28px Lato, sans-serif; text-align: center; color: #222; }
.drawing { width: 100%; height: auto; }
.thick { fill: none; stroke: #111; stroke-width: 2; stroke-linejoin: round; }
.med { fill: none; stroke: #222; stroke-width: 1.3; }
.thin { fill: none; stroke: #444; stroke-width: 1; }
.dim, .frac { font-family: "Liberation Sans", sans-serif; text-anchor: middle; fill: #222; }
.dim { font-size: 16px; }
.frac { font-size: 13px; }
.scroll { width: 10px; display: flex; flex-direction: column; align-items: center; padding: 5px 0 3px; }
.track { flex: 1; align-self: stretch; padding: 4px 1px; }
.thumb { height: 62%; background: #dadada; }

/* Status bar */
.status {
  height: 18px; margin-left: -1px; background: #d60008; color: #fff;
  display: grid; grid-template-columns: 12px 276px 10px 1fr auto; align-items: center; padding-left: 4px;
}
.find { height: 18px; background: #a30005; display: flex; align-items: center; padding: 0 2px 0 8px; }
.find input { flex: 1; min-width: 0; font-style: italic; }
.find input::placeholder { color: #fff; opacity: 1; }
.findgo { opacity: .6; }
.pager { display: flex; align-items: center; justify-self: center; margin-right: 64px; }
.pager svg { opacity: .6; }
.pager input { width: 46px; height: 16px; background: #b40006; text-align: center; margin: 0 3px 0 8px; }
.pager span { margin-right: 32px; }
.zoombar { display: flex; align-items: center; gap: 10px; padding-right: 4px; }
.zoombar button { display: flex; align-items: center; gap: 4px; min-width: 20px; justify-content: center; }
.zoombar .minus { width: 16px; min-width: 16px; height: 18px; background: #ee3c3f; }
.zoombar input {
  appearance: none; width: 80px; height: 18px; margin: 0 -8px 0 -5px;
  background: linear-gradient(#fff, #fff) center / 100% 1px no-repeat;
}
.zoombar input::-webkit-slider-thumb { appearance: none; width: 7px; height: 9px; background: #fff; }
.zoombar .pct { margin-left: 4px; }

/* Taskbar */
.taskbar { height: 32px; display: flex; align-items: stretch; background: #3a2c24; color: #eee; }
.taskbar button { display: flex; align-items: center; justify-content: center; }
.start { width: 43px; }
.search {
  width: 275px; background: #f4f4f4; color: #333; margin: 1px 0; padding: 0 10px;
  display: flex; align-items: center; gap: 8px;
}
.search input { flex: 1; min-width: 0; font-size: 11px; line-height: 16px; }
.search input::placeholder { color: #333; opacity: 1; }
.pins { width: 589px; display: grid; grid-template-columns: repeat(15, 1fr); }
.pins button { margin: 0 3px; border-bottom: 2px solid transparent; border-top: 2px solid transparent; }
.pins .run { border-bottom-color: #6aaee6; }
.pins .active { margin: 0; background: #625854; border-top-color: #625854; }
.pins text { font: 700 8px "Liberation Sans", sans-serif; fill: #fff; text-anchor: middle; }
.tile { width: 20px; height: 20px; background: #f8eee0; font: 700 17px/20px "Liberation Sans", sans-serif; text-align: center; }
.orange { color: #e0962f; }
.crimson { color: #b01e2e; background: #f6e9ea; }
.blue { color: #2c62ac; background: #e6eef8; }
.tray { display: flex; align-items: center; gap: 5px; padding: 0 0 0 19px; }
.clock {
  flex: 1; display: flex; flex-direction: column; justify-content: center; align-items: center;
  font-size: 9px; line-height: 15px; padding-left: 4px;
}
.notify { width: 44px; border-right: 1px solid #776; padding-right: 4px; }
.notify text { font: 10px "Open Sans", sans-serif; fill: #fff; text-anchor: middle; }
```
